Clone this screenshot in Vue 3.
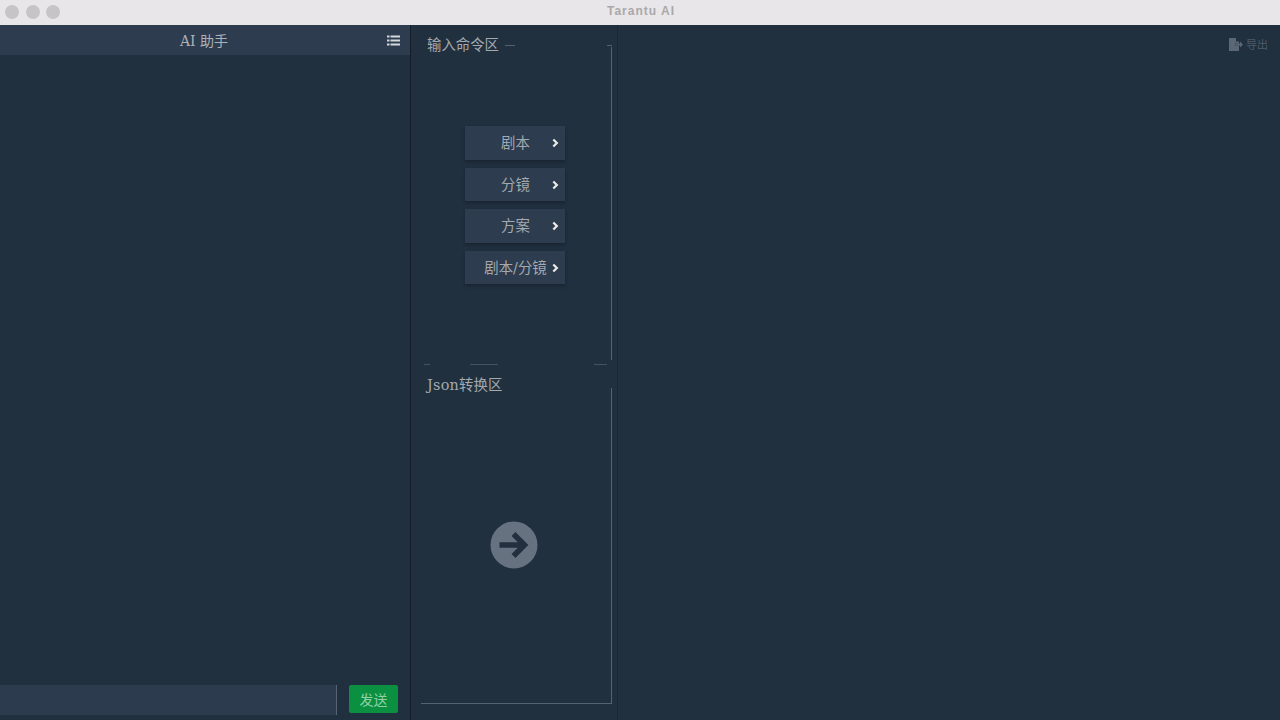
<script setup>
const commands = ['剧本', '分镜', '方案', '剧本/分镜']
</script>

<template>
  <div class="window">
    <div class="titlebar">
      <div class="lights">
        <span class="light"></span>
        <span class="light"></span>
        <span class="light"></span>
      </div>
      <span class="app-title">Tarantu AI</span>
    </div>

    <div class="main">
      <!-- chat -->
      <aside class="chat">
        <div class="chat-header">
          <span class="chat-title">AI 助手</span>
          <svg class="list-icon" viewBox="0 0 13 11" width="13" height="11">
            <rect x="0" y="0.5" width="2.5" height="2" fill="#d5d8db" />
            <rect x="3.5" y="0.5" width="9.5" height="2" fill="#d5d8db" />
            <rect x="0" y="4.5" width="2.5" height="2" fill="#d5d8db" />
            <rect x="3.5" y="4.5" width="9.5" height="2" fill="#d5d8db" />
            <rect x="0" y="8.5" width="2.5" height="2" fill="#d5d8db" />
            <rect x="3.5" y="8.5" width="9.5" height="2" fill="#d5d8db" />
          </svg>
        </div>
        <div class="chat-body"></div>
        <div class="chat-footer">
          <input class="chat-input" type="text" />
          <button class="send-btn">发送</button>
        </div>
      </aside>

      <!-- middle column -->
      <section class="tools">
        <div class="panel panel-command">
          <div class="panel-title">
            <span>输入命令区</span>
            <span class="title-rule"></span>
          </div>
          <div class="panel-box command-box">
            <button v-for="cmd in commands" :key="cmd" class="cmd-btn">
              <span class="cmd-label">{{ cmd }}</span>
              <svg class="chevron" viewBox="0 0 8 10" width="7" height="10">
                <path d="M1.5 1 L5.5 5 L1.5 9" fill="none" stroke="#eceae6" stroke-width="2.6" />
              </svg>
            </button>
          </div>
          <div class="panel-rule"></div>
        </div>
        <div class="panel panel-json">
          <div class="panel-title"><span class="latin">Json</span>转换区</div>
          <div class="panel-box json-box">
            <svg class="go-icon" viewBox="0 0 48 48" width="48" height="48">
              <circle cx="24" cy="24" r="23.5" fill="#677280" />
              <path d="M9.5 24 H34 M23.5 13 L34.5 24 L23.5 35" fill="none" stroke="#222f3e" stroke-width="5.5" stroke-linejoin="miter" />
            </svg>
          </div>
        </div>
      </section>

      <!-- output -->
      <section class="output">
        <div class="export">
          <svg viewBox="0 0 14 13" width="14" height="13">
            <path d="M0 0 H7 V3.5 H10 V5.5 H6 V7.5 H10 V13 H0 Z" fill="#5c6776" />
            <path d="M6.5 5.5 H11 V3.5 L14 6.5 L11 9.5 V7.5 H6.5 Z" fill="#5c6776" />
          </svg>
          <span>导出</span>
        </div>
      </section>
    </div>
  </div>
</template>

<style scoped>
.window {
  width: 1280px;
  height: 720px;
  display: flex;
  flex-direction: column;
  overflow: hidden;
  background: #20303f;
  font-family: "DejaVu Serif", "Noto Sans CJK SC", serif;
}

/* TITLE BAR */
.titlebar {
  height: 25px;
  flex-shrink: 0;
  display: flex;
  align-items: center;
  justify-content: center;
  position: relative;
  background: #e8e6e8;
}
.lights {
  position: absolute;
  left: 5px;
  top: 5px;
  display: flex;
  gap: 6.5px;
}
.light {
  width: 14px;
  height: 14px;
  border-radius: 50%;
  background: #c6c4c7;
}
.app-title {
  font-family: "Liberation Sans", sans-serif;
  font-size: 12px;
  font-weight: 700;
  letter-spacing: 1px;
  color: #aaa8aa;
  margin: -3px 0 0 2px;
}

.main {
  flex: 1;
  display: flex;
  min-height: 0;
}

/* CHAT */
.chat {
  width: 410px;
  flex-shrink: 0;
  display: flex;
  flex-direction: column;
  border-right: 1px solid #141d28;
}
.chat-header {
  height: 30px;
  display: flex;
  align-items: center;
  justify-content: center;
  position: relative;
  background: #2d3c4f;
}
.chat-title {
  font-size: 14px;
  color: #aeb2b7;
  margin-left: -2px;
}
.list-icon {
  position: absolute;
  right: 10px;
  top: 10px;
}
.chat-body {
  flex: 1;
}
.chat-footer {
  display: flex;
  gap: 12px;
  padding: 0 12px 5px 0;
  align-items: flex-start;
}
.chat-input {
  width: 337px;
  height: 30px;
  box-sizing: border-box;
  padding: 0;
  background: #2c3c4e;
  border: none;
  border-right: 1px solid #566270;
  outline: none;
}
.send-btn {
  width: 49px;
  height: 28px;
  padding: 0;
  border: none;
  border-radius: 2px;
  background: #0a9040;
  color: #8fd0a8;
  font-family: inherit;
  font-size: 14px;
}

/* MIDDLE */
.tools {
  width: 206px;
  flex-shrink: 0;
  display: flex;
  flex-direction: column;
  border-right: 1px solid #1c2836;
}
.panel {
  height: 340px;
  display: flex;
  flex-direction: column;
  padding-left: 16px;
  padding-right: 5px;
}
.panel-title {
  display: flex;
  gap: 6px;
  font-size: 14.4px;
  line-height: 18px;
  color: #a4a9ae;
  height: 22px;
  flex-shrink: 0;
  margin-top: 11px;
}
.panel-json .panel-title {
  gap: 0;
}
.latin {
  letter-spacing: 0.25px;
}
.title-rule {
  flex: 1;
  height: 1px;
  margin-top: 9px;
  background: linear-gradient(to right, #566270 10px, transparent 10px, transparent calc(100% - 5px), #566270 calc(100% - 5px));
}
.panel-box {
  flex: 1;
  display: flex;
  flex-direction: column;
  align-items: center;
  border-right: 1px solid #566270;
}
.command-box {
  margin-top: -11px;
  margin-left: -5px;
  padding-top: 79px;
  padding-right: 4px;
  gap: 8px;
}
.panel-rule {
  height: 1px;
  margin: 4px 5px 0 -3px;
  background: linear-gradient(to right, #566270 6px, transparent 6px, transparent 46px, #566270 46px, #566270 74px, transparent 74px, transparent 170px, #566270 170px);
  opacity: 0.7;
}
.json-box {
  justify-content: center;
  margin-top: -10px;
  margin-left: -6px;
  margin-bottom: 1px;
  padding-right: 4px;
  padding-bottom: 2px;
  border-bottom: 1px solid #566270;
}
.cmd-btn {
  width: 100px;
  height: 33.5px;
  flex-shrink: 0;
  padding: 0 0 2px 2px;
  border: none;
  background: #2d3c4f;
  box-shadow: 0 2px 3px rgba(15, 22, 32, 0.45);
  position: relative;
  display: flex;
  align-items: center;
  justify-content: center;
  font-family: inherit;
  color: #a4a9ae;
  font-size: 14.4px;
}
.chevron {
  position: absolute;
  right: 6px;
  top: 12px;
}
.go-icon {
  display: block;
}

/* OUTPUT */
.output {
  flex: 1;
  display: flex;
  justify-content: flex-end;
  padding: 13px 12px 0 0;
}
.export {
  display: flex;
  align-items: flex-start;
  gap: 3px;
  font-family: "Noto Sans CJK SC", sans-serif;
  font-size: 11px;
  line-height: 13px;
  color: #4e5a69;
}
</style>
